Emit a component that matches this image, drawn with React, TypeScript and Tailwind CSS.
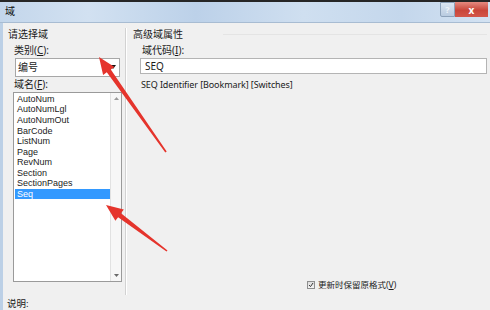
import React from "react";

type P = [number, number];

function arrowPoints(tip: P, tail: P, headLen: number, headHalf: number, neckHalf: number, tailHalf: number) {
  const dx = tip[0] - tail[0];
  const dy = tip[1] - tail[1];
  const len = Math.hypot(dx, dy);
  const ux = dx / len;
  const uy = dy / len;
  const px = -uy;
  const py = ux;
  const bx = tip[0] - ux * headLen;
  const by = tip[1] - uy * headLen;
  const pts: P[] = [
    tip,
    [bx + px * headHalf, by + py * headHalf],
    [bx + px * neckHalf, by + py * neckHalf],
    [tail[0] + px * tailHalf, tail[1] + py * tailHalf],
    [tail[0] - px * tailHalf, tail[1] - py * tailHalf],
    [bx - px * neckHalf, by - py * neckHalf],
    [bx - px * headHalf, by - py * headHalf],
  ];
  return pts.map((p) => `${p[0].toFixed(1)},${p[1].toFixed(1)}`).join(" ");
}

const items = ["AutoNum", "AutoNumLgl", "AutoNumOut", "BarCode", "ListNum", "Page", "RevNum", "Section", "SectionPages", "Seq"];

export default function App() {
  return (
    <div className="relative w-[490px] h-[310px] overflow-hidden bg-[#f0f0f0] flex flex-col text-[#1b1b1b] font-['Noto_Sans','Noto_Sans_CJK_SC',sans-serif]">
      {/* title bar */}
      <div className="h-[23px] shrink-0 border-t-2 border-t-[#262626] border-b border-b-[#a8bcd2] bg-[linear-gradient(90deg,#c3d6eb,#d2e1f1_18%,#bcd1e9_40%,#cfdff0_62%,#c4d7ec_82%,#d3e2f2)] flex items-start">
        <span className="ml-[5px] mt-[3px] text-[10px] leading-[12px] text-[#0f0f0f] font-['Noto_Sans_CJK_SC',sans-serif]">域</span>
        <div className="ml-auto mr-[2px] flex">
          <div className="w-[15px] h-[15px] border border-[#8da2ba] rounded-bl-[2px] bg-[linear-gradient(180deg,#dbe6f2,#b9cbe0)] flex items-center justify-center text-[9px] leading-none text-[#eef3f8] font-bold">?</div>
          <div className="w-[33px] h-[15px] bg-[linear-gradient(180deg,#e58a80,#c9463a_55%,#d3564a)] flex items-center justify-center text-[10px] leading-none text-white font-bold">x</div>
        </div>
      </div>

      <div className="flex-1 flex min-h-0">
        {/* window frame */}
        <div className="w-[3px] shrink-0 bg-[#bcd0e6]" />

        {/* left panel */}
        <div className="w-[121px] shrink-0 flex flex-col">
          <div className="mt-[5px] ml-[5px] text-[10px] leading-[12px]">请选择域</div>
          <div className="mt-[4px] ml-[11px] text-[10px] leading-[12px]">
            类别(<span className="underline">C</span>):
          </div>
          <div className="mt-[2px] ml-[12px] w-[105px] h-[19px] border border-[#a7a7a7] bg-white flex items-center">
            <span className="ml-[2px] text-[10px] leading-[12px]">编号</span>
            <div className="ml-auto mr-[1px] w-[10px] h-[15px] flex items-center justify-center">
              <svg width="6" height="4" viewBox="0 0 6 4"><path d="M0 0 H6 L3 4 Z" fill="#111" /></svg>
            </div>
          </div>
          <div className="mt-[1px] ml-[11px] text-[10px] leading-[12px]">
            域名(<span className="underline">F</span>):
          </div>
          <div className="mt-[2px] ml-[10px] w-[109px] h-[191px] border border-[#9a9a9a] bg-white flex">
            <div className="flex-1 pt-[1px] pl-[1px] font-['Liberation_Sans',Arial,sans-serif]">
              {items.map((t) => (
                <div
                  key={t}
                  className={
                    t === "Seq"
                      ? "h-[10.55px] leading-[10.5px] text-[9px] pl-[2px] bg-[#3399ff] text-white"
                      : "h-[10.55px] leading-[10.5px] text-[9px] pl-[2px]"
                  }
                >
                  {t}
                </div>
              ))}
            </div>
            <div className="w-[11px] shrink-0 border-l border-l-[#e2e2e2] bg-[#f7f7f7] flex flex-col items-center justify-between py-[4px]">
              <svg width="5" height="3" viewBox="0 0 5 3"><path d="M0 3 L2.5 0 L5 3 Z" fill="#9a9a9a" /></svg>
              <svg width="5" height="3" viewBox="0 0 5 3"><path d="M0 0 H5 L2.5 3 Z" fill="#6a6a6a" /></svg>
            </div>
          </div>
          <div className="mt-[16px] ml-[4px] text-[9.5px] leading-[12px]">说明:</div>
        </div>

        {/* divider */}
        <div className="w-[4px] shrink-0 self-start mt-[5px] h-[267px] flex">
          <div className="w-[1px] ml-[1px] bg-[#d2d2d2]" />
          <div className="w-[1px] bg-white" />
        </div>

        {/* right panel */}
        <div className="flex-1 flex flex-col">
          <div className="mt-[5px] flex items-center">
            <span className="ml-[5px] text-[10px] leading-[12px]">高级域属性</span>
            <div className="flex-1 h-[1px] ml-[40px] mr-[3px] bg-[#e4e4e4]" />
          </div>
          <div className="mt-[4px] ml-[14px] text-[10px] leading-[12px]">
            域代码(<span className="underline">I</span>):
          </div>
          <div className="mt-[2px] ml-[12px] mr-[3px] h-[16px] border border-[#b4b4b4] bg-white flex items-center">
            <span className="ml-[4px] text-[10px] leading-[12px]">SEQ</span>
          </div>
          <div className="mt-[5px] ml-[13px] text-[9px] leading-[12px] tracking-[-0.1px]">SEQ Identifier [Bookmark] [Switches]</div>
          <div className="mt-[188px] ml-[179px] flex items-center">
            <div className="w-[8px] h-[8px] border border-[#8e8f8f] bg-[linear-gradient(180deg,#dcdcdc,#f4f4f4)] flex items-center justify-center">
              <svg width="6" height="6" viewBox="0 0 6 6"><path d="M1 3 L2.5 4.6 L5 1" stroke="#3a3a3a" strokeWidth="1" fill="none" /></svg>
            </div>
            <span className="ml-[3px] text-[8.5px] leading-[12px]">
              更新时保留原格式(<span className="underline">V</span>)
            </span>
          </div>
        </div>
      </div>

      {/* red annotation arrows */}
      <svg className="absolute left-0 top-0 pointer-events-none" width="490" height="310" viewBox="0 0 490 310">
        <polygon points={arrowPoints([99, 57], [166, 152], 17, 7, 2.4, 0.8)} fill="#e5342c" />
        <polygon points={arrowPoints([106, 205], [167, 251], 17, 7, 2.4, 0.8)} fill="#e5342c" />
      </svg>
    </div>
  );
}
